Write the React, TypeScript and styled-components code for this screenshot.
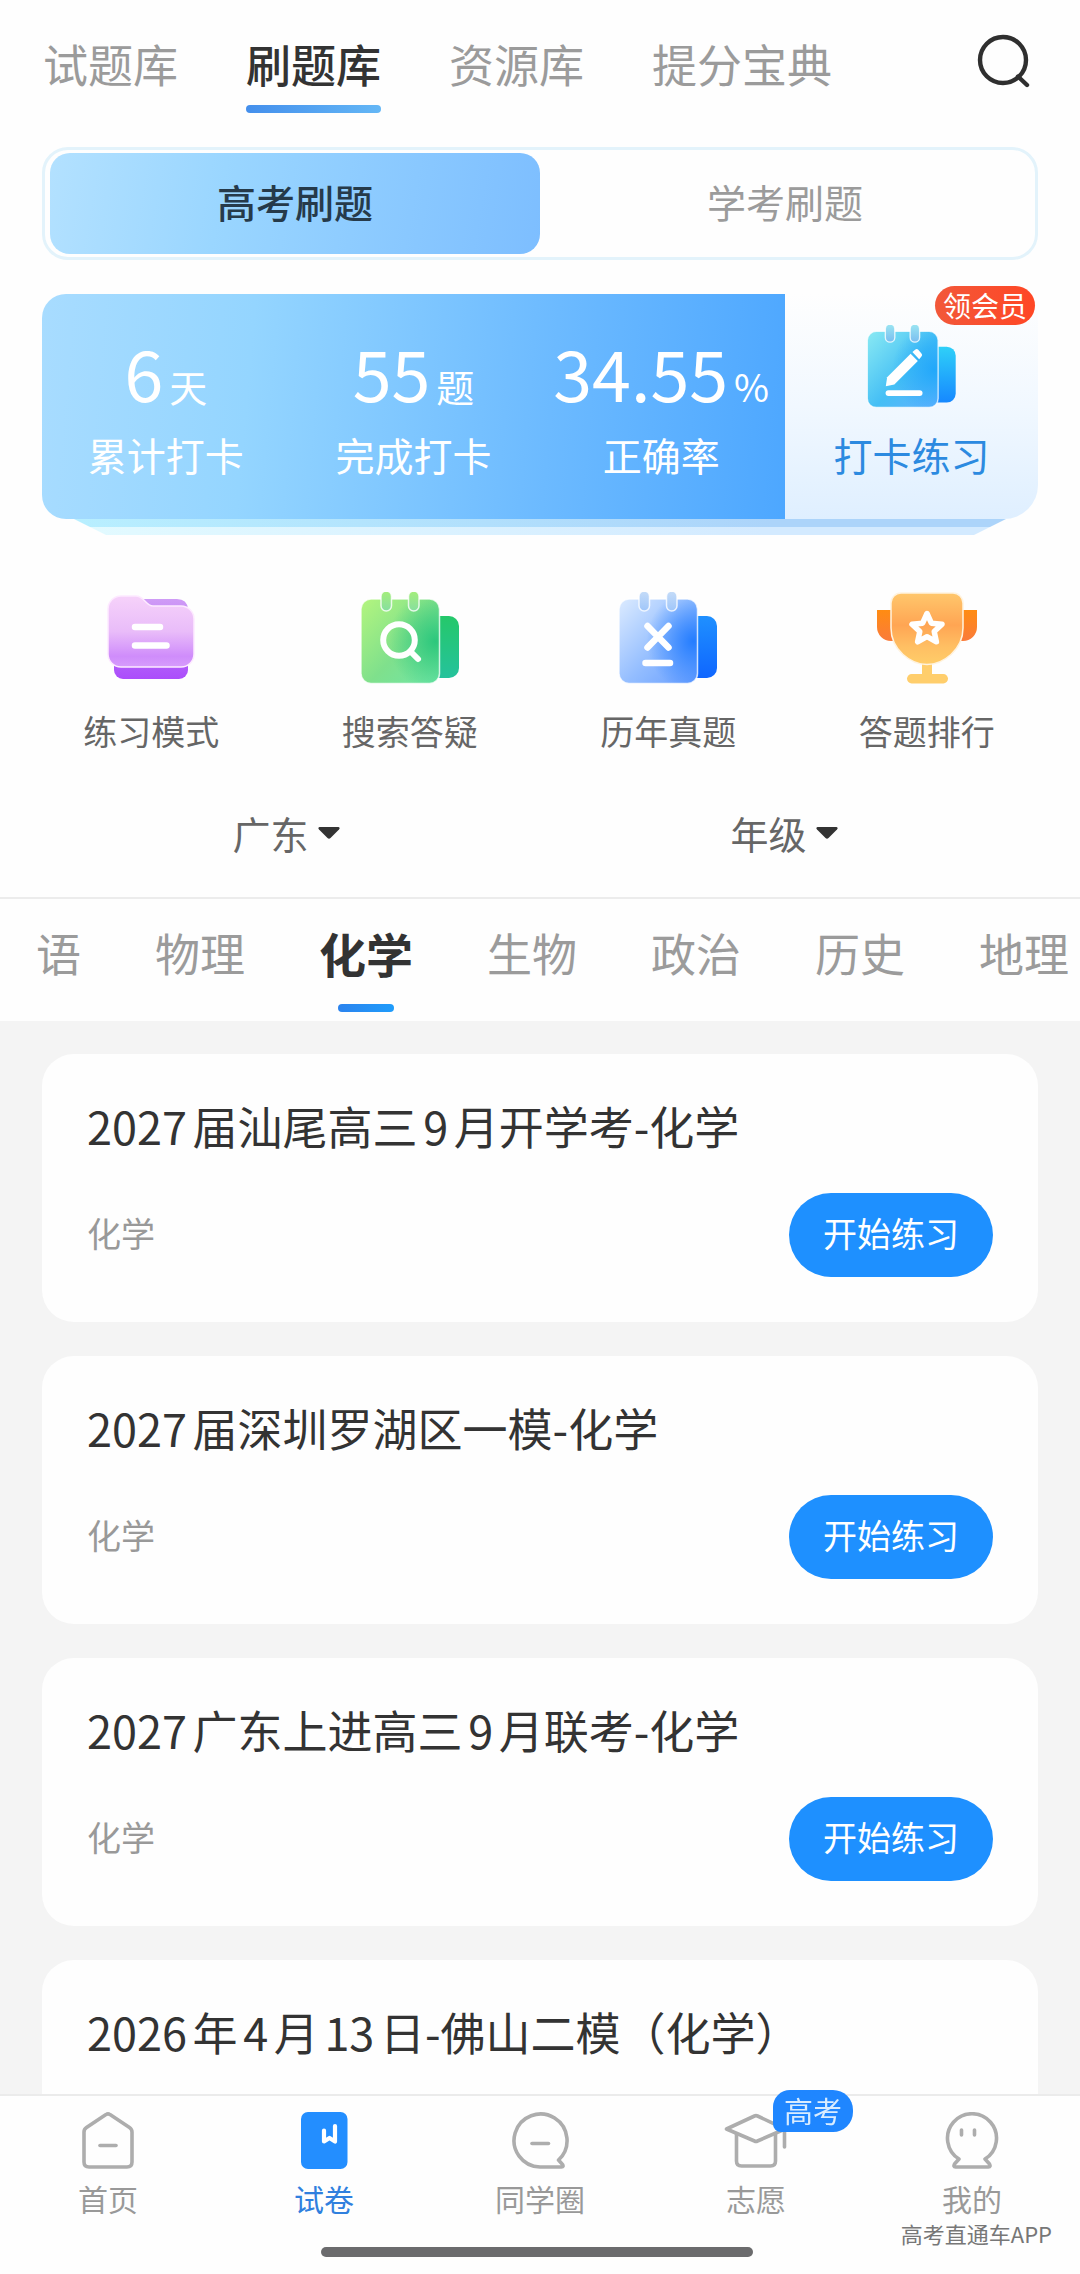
import React, { useId, useState } from "react";
import styled, { createGlobalStyle, css } from "styled-components";

const GlobalStyle = createGlobalStyle`
  * { box-sizing: border-box; }
  html, body { margin: 0; padding: 0; background: #fefefe; }
  body, button, select {
    font-family: "Noto Sans CJK SC", "Noto Sans", sans-serif;
  }
  button, select {
    margin: 0;
    padding: 0;
    border: 0;
    background: none;
    color: inherit;
    cursor: pointer;
  }
  h2, p { margin: 0; font-weight: 400; }
`;

const Screen = styled.div`
  position: relative;
  display: flex;
  flex-direction: column;
  height: 100vh;
  overflow: hidden;
  background: #fefefe;
`;

const TopBar = styled.header`
  display: flex;
  justify-content: space-between;
  align-items: flex-start;
  padding: 34px 48px 34px 43px;
`;

const TopTabs = styled.nav`
  display: flex;
  gap: 68px;
`;

const TopTab = styled.button<{ $active: boolean }>`
  display: flex;
  flex-direction: column;
  gap: 11px;
  font-size: 45px;
  line-height: 60px;
  white-space: nowrap;
  font-weight: ${(p) => (p.$active ? 500 : 400)};
  color: ${(p) => (p.$active ? "#333" : "#9b9b9b")};
  &::after {
    content: "";
    width: 100%;
    height: 8px;
    border-radius: 4px;
    background: ${(p) => (p.$active ? "linear-gradient(90deg, #448fec, #64b7f6)" : "transparent")};
  }
`;

const IconButton = styled.button`
  display: flex;
`;

const Segment = styled.div`
  display: flex;
  margin: 0 42px;
  padding: 3px 5px;
  border: 3px solid #e3f3fb;
  border-radius: 26px;
`;

const SegmentButton = styled.button<{ $active: boolean }>`
  flex: 1;
  height: 101px;
  padding-bottom: 6px;
  border-radius: 20px;
  font-size: 39px;
  line-height: 60px;
  ${(p) =>
    p.$active
      ? css`
          font-weight: 500;
          color: #263a4a;
          background: linear-gradient(100deg, #b3e1ff, #9ad6ff 35%, #7dbeff);
        `
      : css`
          color: #9b9b9b;
        `}
`;

const CheckIn = styled.section`
  display: flex;
  flex-direction: column;
  margin: 34px 42px 0;
`;

const CheckInCard = styled.div`
  display: flex;
`;

const Stats = styled.div`
  flex: 743;
  display: grid;
  grid-template-columns: repeat(3, 1fr);
  border-radius: 24px 0 0 24px;
  color: #fff;
  background: linear-gradient(95deg, #a8dcff, #94d5ff 28%, #6cbaff 68%, #4da7ff);
`;

const Stat = styled.div`
  display: flex;
  flex-direction: column;
  align-items: center;
  gap: 12px;
  padding: 38px 0 35px;
`;

const StatValue = styled.div`
  display: flex;
  align-items: baseline;
  gap: 6px;
  height: 80px;
  font-size: 70px;
  line-height: 80px;
`;

const StatUnit = styled.span`
  font-size: 38px;
  line-height: 40px;
`;

const StatLabel = styled.div`
  font-size: 39px;
  line-height: 60px;
`;

const Practice = styled.button`
  position: relative;
  flex: 253;
  display: flex;
  flex-direction: column;
  align-items: center;
  gap: 16px;
  padding-top: 31px;
  border-radius: 0 24px 34px 0;
  font-size: 39px;
  line-height: 60px;
  color: #2c8ae0;
  background: linear-gradient(180deg, #fefefe, #f1f8ff 50%, #dfefff);
`;

const MemberBadge = styled.span`
  position: absolute;
  top: -8px;
  right: 3px;
  padding: 0 8px 1px;
  border-radius: 20px;
  font-size: 28px;
  line-height: 38px;
  color: #fff;
  background: linear-gradient(90deg, #f2583a, #ff4725);
`;

const CardEdge = styled.div<{ $inset: number; $from: string; $to: string }>`
  height: 8px;
  margin: 0 ${(p) => p.$inset}px;
  clip-path: polygon(0 0, 100% 0, calc(100% - 16px) 100%, 16px 100%);
  background: linear-gradient(90deg, ${(p) => p.$from}, ${(p) => p.$to} 75%);
`;

const Shortcuts = styled.nav`
  display: grid;
  grid-template-columns: repeat(4, 1fr);
  padding: 57px 24px 0 22px;
`;

const Shortcut = styled.button`
  display: flex;
  flex-direction: column;
  align-items: center;
  gap: 22px;
  font-size: 34px;
  line-height: 50px;
  color: #666;
`;

const ShortcutIcon = styled.span`
  display: flex;
  align-items: center;
  justify-content: center;
  height: 92px;
`;

const Filters = styled.div`
  display: grid;
  grid-template-columns: repeat(2, 1fr);
  justify-items: center;
  padding: 47px 47px 34px 37px;
  border-bottom: 2px solid #ececec;
`;

const FilterField = styled.label`
  display: grid;
  align-items: center;
  & > * { grid-area: 1 / 1; }
  & > svg {
    justify-self: end;
    pointer-events: none;
  }
`;

const FilterSelect = styled.select`
  appearance: none;
  padding-right: 30px;
  font-size: 38px;
  line-height: 60px;
  color: #666;
`;

const Subjects = styled.nav`
  display: flex;
  gap: 74px;
  padding: 24px 0 9px 36px;
  overflow: hidden;
`;

const Subject = styled.button<{ $active: boolean }>`
  flex: none;
  display: flex;
  flex-direction: column;
  align-items: center;
  gap: 21px;
  line-height: 60px;
  white-space: nowrap;
  font-size: ${(p) => (p.$active ? 47 : 45)}px;
  font-weight: ${(p) => (p.$active ? 700 : 400)};
  color: ${(p) => (p.$active ? "#333" : "#9b9b9b")};
  &::after {
    content: "";
    width: 56px;
    height: 8px;
    margin: 0 -6px;
    border-radius: 4px;
    background: ${(p) => (p.$active ? "linear-gradient(90deg, #2b83ee, #1f9cfb)" : "transparent")};
  }
`;

const PaperList = styled.main`
  flex: 1;
  min-height: 0;
  display: flex;
  flex-direction: column;
  gap: 34px;
  padding: 33px 42px;
  overflow-y: auto;
  scrollbar-width: none;
  background: #f4f4f4;
`;

const PaperCard = styled.article`
  flex: none;
  display: flex;
  flex-direction: column;
  gap: 37px;
  padding: 42px 45px 45px;
  border-radius: 32px;
  background: #fefefe;
`;

const PaperTitle = styled.h2`
  font-size: 45px;
  line-height: 60px;
  color: #333;
  text-autospace: normal;
`;

const PaperFooter = styled.div`
  display: flex;
  align-items: center;
  justify-content: space-between;
`;

const PaperSubject = styled.p`
  font-size: 34px;
  line-height: 50px;
  padding-bottom: 4px;
  color: #999;
`;

const StartButton = styled.button`
  padding: 15px 34px 19px;
  border-radius: 42px;
  font-size: 34px;
  line-height: 50px;
  color: #fff;
  background: #1e90ff;
`;

const BottomNav = styled.nav`
  flex: none;
  display: grid;
  grid-template-columns: repeat(5, 1fr);
  padding-top: 16px;
  border-top: 2px solid #ebebeb;
  background: #fefefe;
`;

const NavItem = styled.a<{ $active: boolean }>`
  position: relative;
  display: flex;
  flex-direction: column;
  align-items: center;
  gap: 8px;
  font-size: 30px;
  line-height: 40px;
  text-decoration: none;
  color: ${(p) => (p.$active ? "#3080de" : "#999")};
`;

const NavBadge = styled.span`
  position: absolute;
  top: -22px;
  left: calc(50% + 17px);
  padding: 0 11px 2px;
  border-radius: 17px 20px 20px 8px;
  font-size: 29px;
  line-height: 40px;
  color: #d9ecff;
  background: #1f86ff;
`;

const HomeIndicator = styled.div`
  flex: none;
  align-self: center;
  width: 40%;
  height: 10px;
  margin: 29px 6px 17px 0;
  border-radius: 5px;
  background: #6b6b6d;
`;

const Watermark = styled.span`
  position: absolute;
  right: 28px;
  bottom: 26px;
  font-size: 22px;
  line-height: 30px;
  color: #777;
`;

function SearchIcon() {
  return (
    <svg width="56" height="56" viewBox="0 0 56 56" fill="none" stroke="#2f2f2f" strokeWidth="4.4" strokeLinecap="round" aria-hidden="true">
      <circle cx="27" cy="26" r="23" />
      <path d="M42 42.500L51 51" />
    </svg>
  );
}

type NotepadProps = {
  width: number;
  height: number;
  front: [string, string, string];
  back: [string, string];
  ring: [string, string];
  glow: string;
  children: React.ReactNode;
};

function NotepadIcon({ width, height, front, back, ring, glow, children }: NotepadProps) {
  const id = useId();
  return (
    <svg width={width} height={height} viewBox="0 0 98 92" fill="none" aria-hidden="true">
      <defs>
        <linearGradient id={id + "f"} x1="0" y1="0" x2="1" y2="1">
          <stop offset="0" stopColor={front[0]} />
          <stop offset=".55" stopColor={front[1]} />
          <stop offset="1" stopColor={front[2]} />
        </linearGradient>
        <linearGradient id={id + "b"} x1="0" y1="0" x2="0" y2="1">
          <stop offset="0" stopColor={back[0]} />
          <stop offset="1" stopColor={back[1]} />
        </linearGradient>
        <linearGradient id={id + "r"} x1="0" y1="0" x2="0" y2="1">
          <stop offset="0" stopColor={ring[0]} />
          <stop offset="1" stopColor={ring[1]} />
        </linearGradient>
        <radialGradient id={id + "g"} cx=".95" cy=".5" r=".6">
          <stop offset="0" stopColor={glow} />
          <stop offset="1" stopColor={glow} stopOpacity="0" />
        </radialGradient>
      </defs>
      <path d="M70 24H88a10 10 0 0 1 10 10V76a10 10 0 0 1-10 10H70Z" fill={`url(#${id}b)`} />
      <rect x="0" y="7" width="78.500" height="84.500" rx="10" fill={`url(#${id}f)`} />
      <rect x="0" y="7" width="78.500" height="84.500" rx="10" fill={`url(#${id}g)`} stroke="#fff" strokeOpacity=".75" strokeWidth="1.500" />
      <rect x="20" y="-1" width="10.500" height="20" rx="5.200" fill={`url(#${id}r)`} stroke="#fff" strokeOpacity=".8" strokeWidth="1.500" />
      <rect x="47.500" y="-1" width="10.500" height="20" rx="5.200" fill={`url(#${id}r)`} stroke="#fff" strokeOpacity=".8" strokeWidth="1.500" />
      {children}
    </svg>
  );
}

function PracticeIcon() {
  return (
    <NotepadIcon width={89} height={83} front={["#8aeaf3", "#45bff5", "#63b0ff"]} back={["#2fd0f8", "#1688ff"]} ring={["#9be6f2", "#7abdf0"]} glow="#22a8fa">
      <path d="M22 58L48 32L56 40L30 66L20.500 68Z" fill="#fff" />
      <path d="M50 30l3-2.500a2.500 2.500 0 0 1 3.500 0L60 31.500a2.500 2.500 0 0 1 0 3.500L57.500 38Z" fill="#fff" />
      <path d="M23.500 75.500H58" stroke="#fff" strokeWidth="6.500" strokeLinecap="round" />
    </NotepadIcon>
  );
}

function SearchPadIcon() {
  return (
    <NotepadIcon width={98} height={92} front={["#b4f57e", "#7fe08c", "#6fe6a8"]} back={["#25c86a", "#25c29c"]} ring={["#a5ee7b", "#86dfa0"]} glow="#2cc77c">
      <g stroke="#fff" strokeWidth="6" strokeLinecap="round">
        <circle cx="38" cy="48" r="15.800" />
        <path d="M50 60L57 67" />
      </g>
    </NotepadIcon>
  );
}

function ExamPadIcon() {
  return (
    <NotepadIcon width={98} height={92} front={["#dcebff", "#93bdff", "#669dff"]} back={["#1f90ff", "#0f66ff"]} ring={["#c5dcf8", "#9fc6fa"]} glow="#247dff">
      <g stroke="#fff" strokeWidth="6.500" strokeLinecap="round">
        <path d="M28.500 34L49.500 55.500M49.500 34L28.500 55.500" />
        <path d="M26.500 71H51" />
      </g>
    </NotepadIcon>
  );
}

function FolderIcon() {
  const id = useId();
  return (
    <svg width="88" height="86" viewBox="0 0 88 86" fill="none" aria-hidden="true">
      <defs>
        <linearGradient id={id + "f"} x1="0" y1="0" x2="0" y2="1">
          <stop offset="0" stopColor="#f6d2fa" />
          <stop offset=".5" stopColor="#e9bcf9" />
          <stop offset=".85" stopColor="#cf8cfb" />
          <stop offset="1" stopColor="#d79cfc" />
        </linearGradient>
        <linearGradient id={id + "b"} x1="0" y1="0" x2="0" y2="1">
          <stop offset="0" stopColor="#cf9cf6" />
          <stop offset="1" stopColor="#ab4dfb" />
        </linearGradient>
      </defs>
      <path d="M16 4H70Q80 4 81 14V75a9 9 0 0 1-9 9H16a9 9 0 0 1-9-9V14Q7 4 16 4Z" fill={`url(#${id}b)`} />
      <path d="M1 14A13 13 0 0 1 14 1H29C37 1 39 11 46 11H74A13 13 0 0 1 87 24V59A13 13 0 0 1 74 72H14A13 13 0 0 1 1 59Z" fill={`url(#${id}f)`} stroke="#fdeaff" strokeWidth="1.500" />
      <path d="M28 32H53M28 50.500H59.500" stroke="#fff" strokeWidth="6.500" strokeLinecap="round" />
    </svg>
  );
}

function TrophyIcon() {
  const id = useId();
  return (
    <svg width="100" height="92" viewBox="0 0 100 92" fill="none" aria-hidden="true">
      <defs>
        <linearGradient id={id + "c"} x1="0" y1="0" x2="0" y2="1">
          <stop offset="0" stopColor="#ffc76c" />
          <stop offset=".45" stopColor="#ffa553" />
          <stop offset=".75" stopColor="#ffbf63" />
          <stop offset="1" stopColor="#ffcd69" />
        </linearGradient>
        <linearGradient id={id + "h"} x1="0" y1="0" x2="0" y2="1">
          <stop offset="0" stopColor="#ff8c12" />
          <stop offset="1" stopColor="#fa7b3b" />
        </linearGradient>
      </defs>
      <path d="M0 18H20V49H14A14 14 0 0 1 0 35ZM80 18H100V35A14 14 0 0 1 86 49H80Z" fill={`url(#${id}h)`} />
      <path d="M45 68H55V85H45Z" fill="#ffce6c" />
      <rect x="30" y="82" width="41" height="9.500" rx="4.700" fill="#ffce6c" />
      <path d="M24 1H76A10 10 0 0 1 86 11V36C86 58 66 72.500 50 72.500S14 58 14 36V11A10 10 0 0 1 24 1Z" fill={`url(#${id}c)`} stroke="#fff3df" strokeWidth="1.500" />
      <path d="M50 21.500L54.400 31.200L65 32.300L57.200 39.500L59.400 49.800L50 44.700L40.600 49.800L42.800 39.500L35 32.300L45.600 31.200Z" stroke="#fff" strokeWidth="5.500" strokeLinejoin="round" />
    </svg>
  );
}

function NavIcon({ children }: { children: React.ReactNode }) {
  return (
    <svg width="64" height="58" viewBox="0 0 64 58" fill="none" stroke="#adadad" strokeWidth="3.600" strokeLinecap="round" strokeLinejoin="round" aria-hidden="true">
      {children}
    </svg>
  );
}

const navIcons = {
  home: (
    <NavIcon>
      <path d="M30 2.600Q32 1.200 34 2.600L53.500 15.500Q56 17.200 56 20V50Q56 55 51 55H13Q8 55 8 50V20Q8 17.200 10.500 15.500Z" />
      <path d="M24 33.500H40" />
    </NavIcon>
  ),
  book: (
    <NavIcon>
      <rect x="9" y="0" width="46.500" height="57" rx="7" fill="#238eff" stroke="none" />
      <path d="M32 18.500V29.500L37.500 26L43 29.500V14" stroke="#fff" strokeWidth="4.200" />
    </NavIcon>
  ),
  circle: (
    <NavIcon>
      <path d="M32 55A26.500 26.500 0 1 1 50.500 48L54.500 52.500Q56 55 53.500 55Z" />
      <path d="M24 31.500H40.500" />
    </NavIcon>
  ),
  cap: (
    <NavIcon>
      <path d="M12.500 22V49Q12.500 54 17.500 54H46.500Q51.500 54 51.500 49V22" />
      <path d="M2.500 17L30.500 4Q32 3.300 33.500 4L61 17L33.500 29Q32 29.700 30.500 29Z" fill="#fefefe" />
      <path d="M60.500 18V35" />
    </NavIcon>
  ),
  me: (
    <NavIcon>
      <path d="M19 47A24.500 24.500 0 1 1 45 47L49.500 52Q51 55 48.500 55H15.500Q13 55 14.500 52Z" />
      <path d="M21.500 18V23M34.500 18V23" />
    </NavIcon>
  ),
};

const topTabs = ["试题库", "刷题库", "资源库", "提分宝典"];
const segments = ["高考刷题", "学考刷题"];
const stats = [
  { value: "6", unit: "天", label: "累计打卡" },
  { value: "55", unit: "题", label: "完成打卡" },
  { value: "34.55", unit: "%", label: "正确率" },
];
const shortcuts = [
  { label: "练习模式", icon: <FolderIcon /> },
  { label: "搜索答疑", icon: <SearchPadIcon /> },
  { label: "历年真题", icon: <ExamPadIcon /> },
  { label: "答题排行", icon: <TrophyIcon /> },
];
const filters = [
  { id: "region", value: "广东" },
  { id: "grade", value: "年级" },
];
const subjects = ["语", "物理", "化学", "生物", "政治", "历史", "地理"];
const papers = [
  "2027届汕尾高三9月开学考-化学",
  "2027届深圳罗湖区一模-化学",
  "2027广东上进高三9月联考-化学",
  "2026年4月13日-佛山二模（化学）",
];
const navItems = [
  { label: "首页", icon: navIcons.home },
  { label: "试卷", icon: navIcons.book },
  { label: "同学圈", icon: navIcons.circle },
  { label: "志愿", icon: navIcons.cap, badge: "高考" },
  { label: "我的", icon: navIcons.me },
];

export default function App() {
  const [topTab, setTopTab] = useState("刷题库");
  const [segment, setSegment] = useState("高考刷题");
  const [subject, setSubject] = useState("化学");

  return (
    <>
      <GlobalStyle />
      <Screen>
        <TopBar>
          <TopTabs>
            {topTabs.map((t) => (
              <TopTab key={t} $active={t === topTab} onClick={() => setTopTab(t)}>
                {t}
              </TopTab>
            ))}
          </TopTabs>
          <IconButton aria-label="搜索">
            <SearchIcon />
          </IconButton>
        </TopBar>

        <Segment>
          {segments.map((s) => (
            <SegmentButton key={s} $active={s === segment} onClick={() => setSegment(s)}>
              {s}
            </SegmentButton>
          ))}
        </Segment>

        <CheckIn>
          <CheckInCard>
            <Stats>
              {stats.map((s) => (
                <Stat key={s.label}>
                  <StatValue>
                    {s.value}
                    <StatUnit>{s.unit}</StatUnit>
                  </StatValue>
                  <StatLabel>{s.label}</StatLabel>
                </Stat>
              ))}
            </Stats>
            <Practice>
              <PracticeIcon />
              打卡练习
              <MemberBadge>领会员</MemberBadge>
            </Practice>
          </CheckInCard>
          <CardEdge $inset={32} $from="#b8efff" $to="#acd4fa" />
          <CardEdge $inset={48} $from="#e2faff" $to="#d3eaff" />
        </CheckIn>

        <Shortcuts>
          {shortcuts.map((s) => (
            <Shortcut key={s.label}>
              <ShortcutIcon>{s.icon}</ShortcutIcon>
              {s.label}
            </Shortcut>
          ))}
        </Shortcuts>

        <Filters>
          {filters.map((f) => (
            <FilterField key={f.id} htmlFor={f.id}>
              <FilterSelect id={f.id} defaultValue={f.value}>
                <option>{f.value}</option>
              </FilterSelect>
              <svg width="22" height="12" viewBox="0 0 22 12" aria-hidden="true">
                <path d="M1.500 0H20.500Q22.500 1 21 2.500L12.500 11Q11 12.500 9.500 11L1 2.500Q-.5 1 1.500 0Z" fill="#333" />
              </svg>
            </FilterField>
          ))}
        </Filters>

        <Subjects>
          {subjects.map((s) => (
            <Subject key={s} $active={s === subject} onClick={() => setSubject(s)}>
              {s}
            </Subject>
          ))}
        </Subjects>

        <PaperList>
          {papers.map((title) => (
            <PaperCard key={title}>
              <PaperTitle>{title}</PaperTitle>
              <PaperFooter>
                <PaperSubject>化学</PaperSubject>
                <StartButton>开始练习</StartButton>
              </PaperFooter>
            </PaperCard>
          ))}
        </PaperList>

        <BottomNav>
          {navItems.map((n) => (
            <NavItem key={n.label} href="#" $active={n.label === "试卷"}>
              {n.icon}
              {n.label}
              {n.badge && <NavBadge>{n.badge}</NavBadge>}
            </NavItem>
          ))}
        </BottomNav>
        <HomeIndicator />
        <Watermark>高考直通车APP</Watermark>
      </Screen>
    </>
  );
}
